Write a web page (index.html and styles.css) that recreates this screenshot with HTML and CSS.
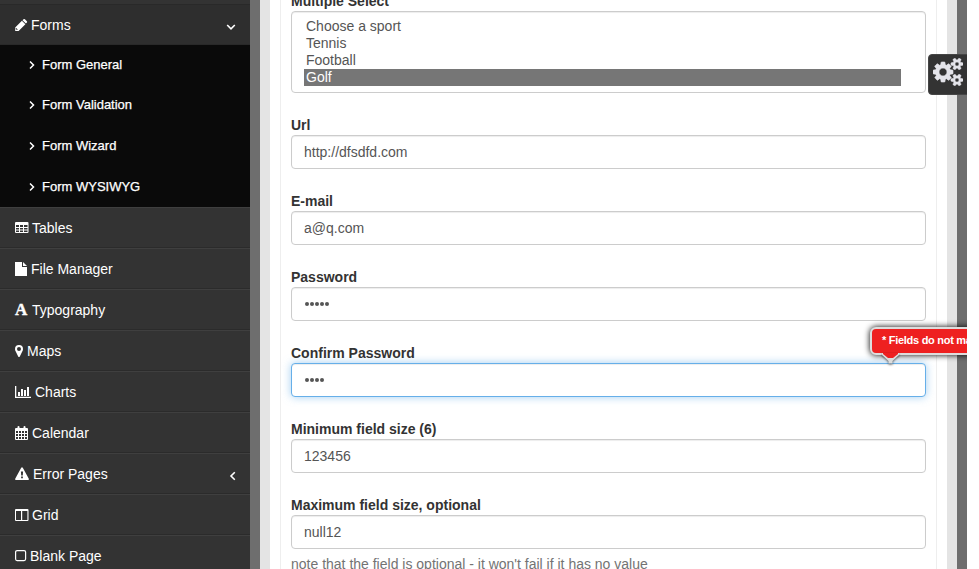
FILE: index.html
```
<!DOCTYPE html>
<html lang="en">
<head>
<meta charset="utf-8">
<title>Form Validation</title>
<link rel="stylesheet" href="styles.css">
</head>
<body>
<div class="app">
  <nav class="sidebar">
    <a class="item forms"><svg class="ic w12" viewBox="0 0 12 14"><path fill-rule="evenodd" d="M7.500 2.800l3.500 3.500-6.800 6.700H.8V9.500zM2.700 12l.6-.6-1.500-1.500-.5.500v.8h.8v.8zM8.100 2.200l1-1q.7-.6 1.400 0l2 2q.6.7 0 1.400l-1 1z" transform="translate(-.6 0)"/></svg><span class="t">Forms</span><svg class="arr down" viewBox="0 0 10 10"><path d="M1.200 3l3.800 3.800L8.800 3"/></svg></a>
    <div class="sub">
      <a><svg viewBox="0 0 6 10"><path d="M1 1.500l3.500 3.500L1 8.500"/></svg><span>Form General</span></a>
      <a><svg viewBox="0 0 6 10"><path d="M1 1.500l3.500 3.500L1 8.500"/></svg><span>Form Validation</span></a>
      <a><svg viewBox="0 0 6 10"><path d="M1 1.500l3.500 3.500L1 8.500"/></svg><span>Form Wizard</span></a>
      <a><svg viewBox="0 0 6 10"><path d="M1 1.500l3.500 3.500L1 8.500"/></svg><span>Form WYSIWYG</span></a>
    </div>
    <a class="item"><svg class="ic w13" viewBox="0 0 13 14"><path fill-rule="evenodd" d="M1 1h11.500a1 1 0 0 1 1 1v9a1 1 0 0 1-1 1H1a1 1 0 0 1-1-1V2a1 1 0 0 1 1-1zM1 4v2h3V4zm4 0v2h3V4zm4 0v2h3.500V4zM1 7v1.500h3V7zm4 0v1.500h3V7zm4 0v1.500h3.500V7zM1 9.500V11h3V9.500zm4 0V11h3V9.500zm4 0V11h3.500V9.500z"/></svg><span class="t">Tables</span></a>
    <a class="item"><svg class="ic w12" viewBox="0 0 12 14"><path d="M0 0h7v5h5v9H0zM8 0l4 4H8z"/></svg><span class="t">File Manager</span></a>
    <a class="item"><span class="letter">A</span><span class="t">Typography</span></a>
    <a class="item"><svg class="ic w8" viewBox="0 0 8 14"><path fill-rule="evenodd" d="M4 1a4 4 0 0 1 4 4c0 1-.2 1.500-.5 2L4.800 12.500q-.8 1-1.600 0L.5 7C.2 6.500 0 6 0 5a4 4 0 0 1 4-4zm0 2a2 2 0 1 0 0 4 2 2 0 0 0 0-4z"/></svg><span class="t">Maps</span></a>
    <a class="item"><svg class="ic w16" viewBox="0 0 16 14"><path d="M0 1h1.300v10.700H16V13H0zM3 7h2v4H3zM6 4h2v7H6zM9 5h2v6H9zM12 2h2v9h-2z"/></svg><span class="t">Charts</span></a>
    <a class="item"><svg class="ic w13" viewBox="0 0 13 14"><path fill-rule="evenodd" d="M2.500 1q0-1 1-1t1 1v1h4V1q0-1 1-1t1 1v1H12a1 1 0 0 1 1 1v10a1 1 0 0 1-1 1H1a1 1 0 0 1-1-1V3a1 1 0 0 1 1-1h1.500zM1 5v2h2V5zm3 0v2h2V5zm3 0v2h2V5zm3 0v2h2V5zM1 8v2h2V8zm3 0v2h2V8zm3 0v2h2V8zm3 0v2h2V8zM1 11v2h2v-2zm3 0v2h2v-2zm3 0v2h2v-2zm3 0v2h2v-2z"/></svg><span class="t">Calendar</span></a>
    <a class="item"><svg class="ic w14" viewBox="0 0 14 14"><path fill-rule="evenodd" d="M6.200.7q.8-1 1.600 0l6 11q.5 1.300-.8 1.300H1q-1.300 0-.8-1.300zM5.900 4.500l.3 4h1.600l.3-4zM6.100 9.500v1.700h1.800V9.500z"/></svg><span class="t">Error Pages</span><svg class="arr left" viewBox="0 0 10 10"><path d="M6.800 1.200L3 5l3.800 3.800"/></svg></a>
    <a class="item"><svg class="ic w13" viewBox="0 0 13 14"><path fill-rule="evenodd" d="M1 1h11.500a1 1 0 0 1 1 1v10a1 1 0 0 1-1 1H1a1 1 0 0 1-1-1V2a1 1 0 0 1 1-1zm0 2v9h5V3zm6.200 0v9h5.200V3z"/></svg><span class="t">Grid</span></a>
    <a class="item"><svg class="ic w11" viewBox="0 0 11 14"><rect class="line" x=".6" y="1.600" width="10" height="10" rx="1.500"/></svg><span class="t">Blank Page</span></a>
  </nav>
  <main class="frame"><div class="panel"><form class="form">
    <div class="group"><label>Multiple Select</label><div class="list"><div>Choose a sport</div><div>Tennis</div><div>Football</div><div class="sel">Golf</div></div></div>
    <div class="group"><label>Url</label><div class="field">http://dfsdfd.com</div></div>
    <div class="group"><label>E-mail</label><div class="field">a@q.com</div></div>
    <div class="group"><label>Password</label><div class="field dots"><i></i><i></i><i></i><i></i><i></i></div></div>
    <div class="group"><label>Confirm Password</label><div class="field dots focus"><i></i><i></i><i></i><i></i></div></div>
    <div class="group"><label>Minimum field size (6)</label><div class="field">123456</div></div>
    <div class="group"><label>Maximum field size, optional</label><div class="field">null12</div><p class="help">note that the field is optional - it won't fail if it has no value</p></div>
  </form></div></main>
  <div class="tip"><div class="tip-box">* Fields do not match</div><svg class="tip-arrow" viewBox="0 0 17 11"><path class="tail-edge" d="M0 0h17v2L10.500 8v2.500h-4V8L0 2z"/><path class="tail" d="M1 0h15v1L11 5H6L1 1z"/></svg></div>
  <div class="cogs"><svg viewBox="0 0 1920 1792"><path d="M896 896q0-106-75-181t-181-75-181 75-75 181 75 181 181 75 181-75 75-181zm768 512q0-52-38-90t-90-38-90 38-38 90q0 53 37.500 90.500t90.500 37.500 90.500-37.500 37.500-90.500zm0-1024q0-52-38-90t-90-38-90 38-38 90q0 53 37.500 90.500t90.500 37.500 90.500-37.500 37.500-90.500zm-384 421v185q0 10-7 19.500t-16 10.500l-155 24q-11 35-32 76 34 48 90 115 7 11 7 20 0 12-7 19-23 30-82.500 89.500t-78.500 59.500q-11 0-21-7l-115-90q-37 19-77 31-11 108-23 155-7 24-30 24h-186q-11 0-20-7.500t-10-17.500l-23-153q-34-10-75-31l-118 89q-7 7-20 7-11 0-21-8-144-133-144-160 0-9 7-19 10-14 41-53t47-61q-23-44-35-82l-152-24q-10-1-17-9.500t-7-19.500v-185q0-10 7-19.500t16-10.500l155-24q11-35 32-76-34-48-90-115-7-11-7-20 0-12 7-20 22-30 82-89t79-59q11 0 21 7l115 90q34-18 77-32 11-108 23-154 7-24 30-24h186q11 0 20 7.500t10 17.500l23 153q34 10 75 31l118-89q8-7 20-7 11 0 21 8 144 133 144 160 0 8-7 19-12 16-42 54t-45 60q23 48 34 82l152 23q10 2 17 10.500t7 19.500zm640 533v140q0 16-149 31-12 27-30 52 51 113 51 138 0 4-4 7-122 71-124 71-8 0-46-47t-52-68q-20 2-30 2t-30-2q-14 21-52 68t-46 47q-2 0-124-71-4-3-4-7 0-25 51-138-18-25-30-52-149-15-149-31v-140q0-16 149-31 13-29 30-52-51-113-51-138 0-4 4-7 4-2 35-20t59-34 30-16q8 0 46 46.500t52 67.500q20-2 30-2t30 2q51-71 92-112l6-2q4 0 124 70 4 3 4 7 0 25-51 138 17 23 30 52 149 15 149 31zm0-1024v140q0 16-149 31-12 27-30 52 51 113 51 138 0 4-4 7-122 71-124 71-8 0-46-47t-52-68q-20 2-30 2t-30-2q-14 21-52 68t-46 47q-2 0-124-71-4-3-4-7 0-25 51-138-18-25-30-52-149-15-149-31v-140q0-16 149-31 13-29 30-52-51-113-51-138 0-4 4-7 4-2 35-20t59-34 30-16q8 0 46 46.500t52 67.500q20-2 30-2t30 2q51-71 92-112l6-2q4 0 124 70 4 3 4 7 0 25-51 138 17 23 30 52 149 15 149 31z"/></svg></div>
</div>
</body>
</html>
```
FILE: styles.css
```
* { box-sizing: border-box; }
html, body { margin: 0; height: 100%; overflow: hidden; background: #fff; }
body { font: 14px/20px "Liberation Sans", Arial, sans-serif; color: #333; }
.app { position: relative; display: flex; width: 967px; height: 569px; overflow: hidden; background: #6e6e6e; }

.sidebar { width: 250px; flex: none; padding-top: 4px; background: #333; color: #fff; }
.item { display: flex; align-items: center; height: 41px; padding: 0 14px 0 15px; border-top: 1px solid #3f3f3f; border-bottom: 1px solid #2b2b2b; white-space: nowrap; }
.item.forms { background: #2e2e2e; border-color: #292929; }
.ic { height: 14px; flex: none; margin-right: 4px; fill: #fff; overflow: visible; }
.w8 { width: 8px; }
.w11 { width: 11px; }
.w12 { width: 12px; }
.w13 { width: 13px; }
.w14 { width: 14px; }
.w16 { width: 16px; }
.line { fill: none; stroke: #fff; stroke-width: 1.2; }
.letter { width: 13px; margin-right: 4px; font: bold 17px/20px "Liberation Serif", serif; -webkit-text-stroke: .4px #fff; }
.arr { width: 10px; height: 10px; margin-left: auto; fill: none; stroke: #fff; stroke-width: 1.6; position: relative; top: 2px; }
.arr.left { margin-right: -2px; }
.sub { height: 162px; background: #0a0a0a; font-size: 13px; -webkit-text-stroke: .25px #fff; }
.sub a { display: flex; align-items: center; height: 40.6px; padding: 0 0 1px 29px; }
.sub svg { width: 6px; height: 10px; margin-right: 7px; fill: none; stroke: #fff; stroke-width: 1.5; }

.frame { width: 697px; margin-left: 10px; padding: 0 10px; background: #e4e4e4; }
.panel { height: 100%; padding: 0 10px; background: #fff; }
.form { display: flow-root; height: 100%; width: 657px; padding: 0 10px; border: solid #eee; border-width: 0 1px; }
.group { margin-bottom: 22px; }
.group:first-child { margin-top: -9px; }
label { display: block; height: 20px; font-weight: bold; }
.field, .list { border: 1px solid #ccc; border-radius: 4px; box-shadow: inset 0 1px 1px rgba(0,0,0,.075); color: #555; background: #fff; }
.field { height: 34px; padding: 6px 12px; }
.list { height: 82px; padding: 6px 24px 6px 12px; line-height: 17px; }
.list div { height: 17px; padding-left: 2px; }
.list .sel { background: #767676; color: #fff; }
.dots { display: flex; align-items: center; gap: 1px; padding: 6px 12px 7px 12.5px; }
.dots i { width: 4px; height: 4px; border-radius: 50%; background: #555; }
.focus { border-color: #66afe9; box-shadow: inset 0 1px 1px rgba(0,0,0,.075), 0 0 8px rgba(102,175,233,.6); }
.help { margin: 5px 0 0; color: #737373; }

.tip { position: absolute; left: 870px; top: 327px; }
.tip-box { height: 28px; width: 150px; padding: 2px 10px; border: 2px solid #ddd; border-radius: 6px; background: #ee2020; box-shadow: 0 0 6px #000; color: #fff; font-size: 11px; font-weight: bold; line-height: 18px; letter-spacing: -.28px; white-space: nowrap; }
.tip-arrow { position: absolute; left: 12px; top: 26px; width: 17px; height: 11px; filter: drop-shadow(0 1px 1px rgba(0,0,0,.6)); }
.tail-edge { fill: #ddd; }
.tail { fill: #ee2020; }
.cogs { position: absolute; left: 928px; top: 54px; width: 41px; height: 41px; padding: 3px 4px; border: 1px solid #454545; border-radius: 4px 0 0 4px; background: #333; }
.cogs svg { display: block; width: 30px; height: 28px; fill: #e4e4ea; stroke: #e4e4ea; stroke-width: 40; }
```
